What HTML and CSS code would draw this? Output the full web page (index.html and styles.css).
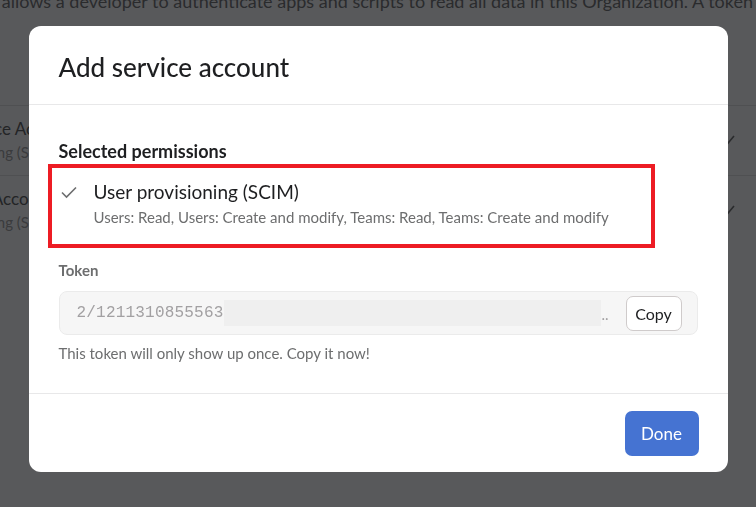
FILE: index.html
```html
<!DOCTYPE html>
<html lang="en">
<head>
<meta charset="utf-8">
<title>Add service account</title>
<link rel="stylesheet" href="styles.css">
</head>
<body>
  <main class="page">
    <p class="intro"><span>A service account token allows a developer to authenticate apps and scripts to read all data in this Organization. A token</span></p>
    <ul class="accounts">
      <li class="account">
        <div class="account-info">
          <div class="account-name">Google Service Account</div>
          <div class="account-scope">User provisioning (SCIM)</div>
        </div>
        <svg class="account-mark" width="16" height="16" viewBox="0 0 16 16"><path d="M2 8.5l4 4L14 3" fill="none" stroke="currentColor" stroke-width="1.6"/></svg>
      </li>
      <li class="account">
        <div class="account-info">
          <div class="account-name">Azure SCIM Account</div>
          <div class="account-scope">User provisioning (SCIM)</div>
        </div>
        <svg class="account-mark" width="16" height="16" viewBox="0 0 16 16"><path d="M2 8.5l4 4L14 3" fill="none" stroke="currentColor" stroke-width="1.6"/></svg>
      </li>
    </ul>
  </main>

  <div class="overlay">
    <section class="dialog" role="dialog" aria-labelledby="dialog-title">
      <header class="dialog-header">
        <h1 id="dialog-title" class="dialog-title">Add service account</h1>
      </header>

      <div class="dialog-body">
        <h2 class="section-title">Selected permissions</h2>
        <div class="permission highlight">
          <svg class="permission-check" width="18" height="18" viewBox="0 0 18 18"><path d="M2 9.5l4.5 4.5L16 4.5" fill="none" stroke="currentColor" stroke-width="1.6"/></svg>
          <div class="permission-text">
            <div class="permission-name">User provisioning (SCIM)</div>
            <div class="permission-detail">Users: Read, Users: Create and modify, Teams: Read, Teams: Create and modify</div>
          </div>
        </div>

        <label class="field-label">Token</label>
        <div class="token-field">
          <span class="token-value">2/12113108555639</span>
          <span class="token-redacted"></span>
          <span class="token-more">..</span>
          <button class="btn-copy" type="button">Copy</button>
        </div>
        <p class="hint">This token will only show up once. Copy it now!</p>
      </div>

      <footer class="dialog-footer">
        <button class="btn-primary" type="button">Done</button>
      </footer>
    </section>
  </div>
</body>
</html>
```

FILE: styles.css
```css
* {
  box-sizing: border-box;
}

html, body {
  margin: 0;
  height: 100%;
}

body {
  background: #58595b;
  font-family: "Lato", "Noto Sans", "Liberation Sans", sans-serif;
  color: #1e1f21;
  overflow: hidden;
}

/* dimmed page behind the dialog */
.page {
  width: 100%;
}

.intro {
  display: flex;
  justify-content: flex-end;
  margin: -11px 0 0 0;
  padding-right: 3px;
  font-size: 18px;
  line-height: 24px;
  color: #2a2b2d;
  white-space: nowrap;
}

.accounts {
  list-style: none;
  margin: 92px 0 0 -101px;
  padding: 0;
}

.account {
  display: flex;
  align-items: center;
  justify-content: space-between;
  height: 70px;
  padding: 0 20px 0 0;
  border-top: 1px solid #4f5052;
}

.account-name {
  font-size: 17px;
  line-height: 22px;
  color: #232426;
}

.account-scope {
  font-size: 15px;
  line-height: 24px;
  color: #3a3b3d;
}

.account-mark {
  color: #2a2b2d;
}

/* dialog */
.overlay {
  position: fixed;
  inset: 0;
  display: flex;
  justify-content: center;
  align-items: flex-start;
  padding-top: 26px;
}

.dialog {
  width: 699px;
  background: #fff;
  border-radius: 12px;
  overflow: hidden;
}

.dialog-header {
  padding: 26px 30px 22px;
  border-bottom: 1px solid #e8e8e9;
}

.dialog-title {
  margin: 0;
  font-size: 26px;
  line-height: 30px;
  font-weight: 500;
  color: #1e1f21;
}

.dialog-body {
  padding: 34px 30px 30px;
}

.section-title {
  margin: 0;
  font-size: 18px;
  line-height: 24px;
  font-weight: 700;
  color: #1e1f21;
}

.permission {
  display: flex;
  align-items: flex-start;
  gap: 16px;
  margin-top: 1px;
}

.highlight {
  width: 607px;
  margin-left: -11px;
  padding: 12px 0 17px 8px;
  border: 4px solid #ed1c24;
}

.permission-check {
  margin-top: 3px;
  color: #6d6e6f;
  flex: none;
}

.permission-name {
  font-size: 19px;
  line-height: 24px;
  color: #1e1f21;
}

.permission-detail {
  margin-top: 3px;
  font-size: 15px;
  line-height: 20px;
  color: #6d6e6f;
}

.field-label {
  display: block;
  margin-top: 12px;
  font-size: 15px;
  line-height: 20px;
  font-weight: 700;
  color: #6d6e6f;
}

.token-field {
  display: flex;
  align-items: center;
  height: 44px;
  margin-top: 11px;
  padding: 0 15px 0 17px;
  background: #f6f6f6;
  border: 1px solid #ebebeb;
  border-radius: 8px;
}

.token-value {
  font-family: "Liberation Mono", "DejaVu Sans Mono", monospace;
  font-size: 16px;
  letter-spacing: 0.2px;
  color: #a2a0a2;
  width: 147px;
  white-space: nowrap;
  overflow: hidden;
}

.token-redacted {
  width: 377px;
  height: 26px;
  background: #efefef;
}

.token-more {
  font-size: 15px;
  color: #a2a0a2;
  margin-left: 1px;
  margin-top: 2px;
}

.btn-copy {
  margin-left: auto;
  width: 56px;
  height: 35px;
  padding: 0;
  background: #fff;
  border: 1px solid #cfcbcb;
  border-radius: 7px;
  font-family: inherit;
  font-size: 16px;
  color: #1e1f21;
}

.hint {
  margin: 8px 0 0;
  font-size: 15px;
  line-height: 20px;
  color: #6d6e6f;
}

.dialog-footer {
  display: flex;
  justify-content: flex-end;
  padding: 17px 29px 16px;
  border-top: 1px solid #e8e8e9;
}

.btn-primary {
  width: 74px;
  height: 45px;
  padding: 0;
  background: #4573d2;
  border: 0;
  border-radius: 7px;
  font-family: inherit;
  font-size: 17px;
  color: #fff;
}
```
